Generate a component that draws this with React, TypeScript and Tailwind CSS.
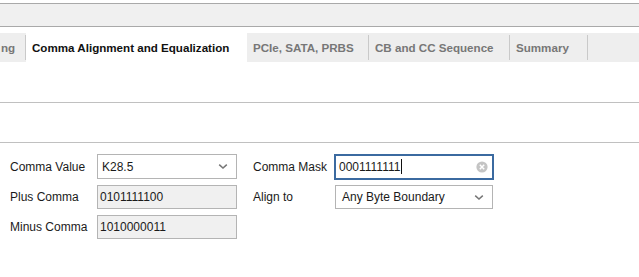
import React from "react";

const TABS = [
  { label: "PCIe, SATA, PRBS", w: "w-[122px]" },
  { label: "CB and CC Sequence", w: "w-[141px]" },
  { label: "Summary", w: "w-[78px]" },
];

function Chevron() {
  return (
    <svg width="10" height="7" viewBox="0 0 10 7" className="text-[#777]">
      <path d="M1.2 1.6 L5 5 L8.8 1.6" fill="none" stroke="currentColor" strokeWidth="1.5" />
    </svg>
  );
}

function ClearIcon() {
  return (
    <svg width="12" height="12" viewBox="0 0 12 12">
      <circle cx="6" cy="6" r="5.6" fill="#c4c4c4" />
      <path d="M3.8 3.8 L8.2 8.2 M8.2 3.8 L3.8 8.2" stroke="#ffffff" strokeWidth="1.5" />
    </svg>
  );
}

function Label({ children, w }: { children: React.ReactNode; w: string }) {
  return <div className={`${w} text-[12px] text-[#1a1a1a]`}>{children}</div>;
}

export default function App() {
  return (
    <div
      className="w-[639px] h-[277px] bg-white overflow-hidden text-[#1a1a1a]"
      style={{ fontFamily: '"Liberation Sans", Arial, sans-serif' }}
    >
      {/* toolbar band */}
      <div className="mt-[3px] h-[24px] border-y border-[#a9a9a9] bg-[#f0f0f0]" />

      {/* tab bar */}
      <div className="mt-[6px] h-[29px] bg-[#eeeeee] flex items-stretch text-[11.6px] font-bold">
        <div className="w-[25px] flex items-center text-[#777] overflow-hidden">
          <span className="pl-px">ng</span>
        </div>
        <div className="w-px my-[2px] bg-[#c9c9c9]" />
        <div className="w-[221px] bg-white flex items-center pl-[6px] text-[#111]">
          Comma Alignment and Equalization
        </div>
        {TABS.map((t) => (
          <div key={t.label} className={`${t.w} flex items-stretch`}>
            <div className="flex-1 flex items-center pl-[6px] text-[#777]">{t.label}</div>
            <div className="w-px my-[2px] bg-[#c9c9c9]" />
          </div>
        ))}
      </div>

      <div className="mt-[40px] h-px bg-[#c0c0c0]" />
      <div className="mt-[39px] h-px bg-[#c0c0c0]" />

      {/* form */}
      <div className="mt-[11px] flex">
        <div className="flex flex-col gap-[6px] pl-[10px]">
          <div className="flex items-center h-[25px]">
            <Label w="w-[87px]">Comma Value</Label>
            <div className="w-[140px] h-[25px] border border-[#b4b4b4] bg-white flex items-center justify-between pl-[4px] pr-[8px] text-[12px]">
              <span>K28.5</span>
              <Chevron />
            </div>
          </div>
          <div className="flex items-center h-[24px]">
            <Label w="w-[87px]">Plus Comma</Label>
            <div className="w-[140px] h-[24px] border border-[#b4b4b4] bg-[#f0f0f0] flex items-center pl-[2px] text-[12px]">
              0101111100
            </div>
          </div>
          <div className="flex items-center h-[24px]">
            <Label w="w-[87px]">Minus Comma</Label>
            <div className="w-[140px] h-[24px] border border-[#b4b4b4] bg-[#f0f0f0] flex items-center pl-[2px] text-[12px]">
              1010000011
            </div>
          </div>
        </div>

        <div className="flex flex-col gap-[6px] ml-[16px]">
          <div className="flex items-center h-[25px]">
            <Label w="w-[81px]">Comma Mask</Label>
            <div className="w-[160px] h-[26px] border-2 border-[#3b6aa0] bg-white flex items-center justify-between pl-[3px] pr-[4px] text-[12px]">
              <span className="flex items-center">
                0001111111
                <span className="ml-px w-px h-[15px] bg-[#111]" />
              </span>
              <ClearIcon />
            </div>
          </div>
          <div className="flex items-center h-[24px]">
            <Label w="w-[82px]">Align to</Label>
            <div className="w-[158px] h-[24px] border border-[#b4b4b4] bg-white flex items-center justify-between pl-[6px] pr-[8px] text-[12px]">
              <span>Any Byte Boundary</span>
              <Chevron />
            </div>
          </div>
        </div>
      </div>
    </div>
  );
}
